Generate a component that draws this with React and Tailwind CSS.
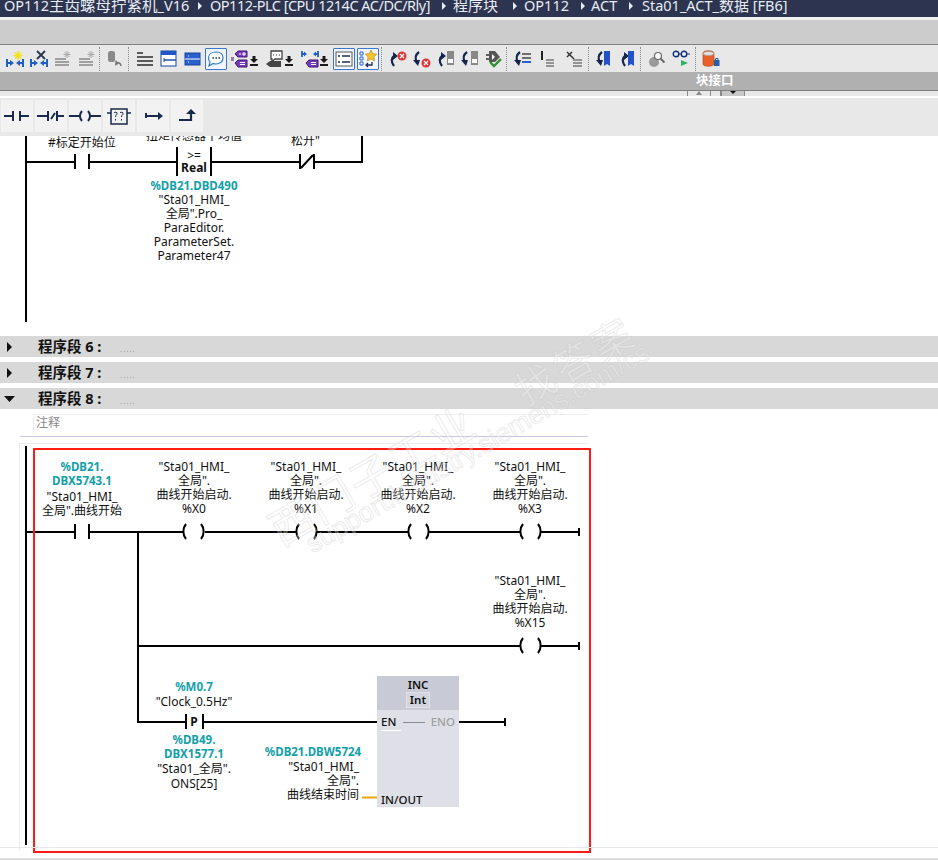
import React from 'react';

const FONT = "font-['Noto_Sans','Noto_Sans_CJK_SC',sans-serif]";

const Chevron = () => (
  <svg width="6" height="10" viewBox="0 0 6 10" className="shrink-0">
    <path d="M1 1l4 4-4 4z" fill="#e8ecf4" />
  </svg>
);

/* ---- toolbar icons, 18x18 ---- */
const Icon = ({ children, w = 18 }) => (
  <svg width={w} height="18" viewBox={`0 0 ${w} 18`} className="shrink-0" fill="none">
    {children}
  </svg>
);

const NetGlyph = ({ color = '#1f5fc4' }) => (
  <g>
    <path d="M1 9v8M17 9v8M1 13h3M14 13h3" stroke={color} strokeWidth="2" />
    <path d="M4 10l4 3-4 3zM14 10l-4 3 4 3z" fill={color} />
  </g>
);

const Lines = ({ color = '#6f6f6f' }) => (
  <path d="M1 9h11M1 12h14M1 15h14" stroke={color} strokeWidth="2" />
);

const Spark = () => (
  <path d="M13 1v7M9.500 4.500h7M10.500 2l5 5M15.500 2l-5 5" stroke="#a8a8a8" strokeWidth="1" />
);

const Cross = ({ x = 13, y = 5 }) => (
  <g>
    <circle cx={x} cy={y} r="4.500" fill="#e0363a" />
    <path d={`M${x - 2} ${y - 2}l4 4m0-4l-4 4`} stroke="#fff" strokeWidth="1.200" />
  </g>
);

const CurveUp = () => (
  <g>
    <path d="M5 16C2 12 2 8 5 6" stroke="#14254f" strokeWidth="2.200" />
    <path d="M4 2l5 4-5 4z" fill="#14254f" />
  </g>
);

const CurveDown = () => (
  <g>
    <path d="M6 2C2 5 2 9 4 12" stroke="#14254f" strokeWidth="2.200" />
    <path d="M0 10l7 0-2 6z" fill="#14254f" />
  </g>
);

const Tag = () => (
  <g>
    <path d="M5 4l3-3h9v6H8z" fill="#7b3bb8" stroke="#3c1570" />
    <path d="M5 13l3-3h9v7H8z" fill="#7b3bb8" stroke="#3c1570" />
    <path d="M10 12.500h5M10 14.500h5" stroke="#fff" />
    <path d="M10 3v2M13 3v2h2V3z" stroke="#fff" />
    <path d="M1 8h3M1 10h3" stroke="#3c1570" />
  </g>
);

const DownBar = () => (
  <svg width="8" height="18" viewBox="0 0 8 18" className="shrink-0">
    <path d="M2.500 6h3v3H8L4 13 0 9h2.500zM0 14h8v2H0z" fill="#1a1a1a" />
  </svg>
);

const Sep = ({ className }) => (
  <div className={`h-[24px] shrink-0 border-l border-dotted border-[#8a8a8a] ${className}`} />
);

const Selected = ({ className, children }) => (
  <div className={`flex h-[22px] w-[22px] shrink-0 items-center justify-center rounded-[1px] border border-[#3a78d0] bg-[#f2f6fc] ${className}`}>
    {children}
  </div>
);

const Toolbar = () => (
  <div className="flex h-[27px] items-center bg-[#e8e8e8] pl-[6px]">
    <Icon>
      <NetGlyph />
      <path d="M12 1v9M7.500 5.500h9M9 2.500l6 6M15 2.500l-6 6" stroke="#f2e21a" strokeWidth="1.400" />
    </Icon>
    <div className="ml-[6px]">
      <Icon>
        <NetGlyph />
        <path d="M7 1l8 8M15 1l-8 8" stroke="#2a3550" strokeWidth="1.800" />
      </Icon>
    </div>
    <div className="ml-[6px]">
      <Icon><Lines color="#a0a0a0" /><Spark /></Icon>
    </div>
    <div className="ml-[6px]">
      <Icon><Lines color="#a0a0a0" /><Spark /></Icon>
    </div>
    <Sep className="ml-[3px]" />
    <div className="ml-[6px]">
      <Icon>
        <rect x="2" y="1" width="7" height="11" rx="2.500" fill="#8a8a8a" />
        <path d="M15 16c0-3-3-4-5-3M10 10.500v4l3-2" stroke="#777" strokeWidth="1.500" />
      </Icon>
    </div>
    <Sep className="ml-[4px]" />
    <div className="ml-[7px]">
      <Icon>
        <path d="M1 3h6M1 7h16M1 11h16M1 15h16" stroke="#5a5a5a" strokeWidth="2" />
      </Icon>
    </div>
    <div className="ml-[6px]">
      <Icon>
        <rect x="1" y="1" width="15" height="15" fill="#fff" stroke="#16459e" />
        <rect x="1" y="1" width="15" height="4" fill="#1f57c8" />
        <path d="M4 10h12" stroke="#16459e" strokeWidth="1.400" />
        <path d="M4 8v4" stroke="#16459e" />
      </Icon>
    </div>
    <div className="ml-[6px]">
      <Icon>
        <rect x="1" y="3" width="15" height="12" fill="#2a5fd0" stroke="#16459e" />
        <path d="M1 9h15" stroke="#fff" />
        <path d="M4 6h1M4 12h1" stroke="#fff" />
      </Icon>
    </div>
    <Selected className="ml-[3px]">
      <Icon>
        <path d="M9 2c4.500 0 7 2.500 7 6s-3 6-7 6c-1 0-2 0-3-.5L2 16l1-4c-1-1-1.500-2.500-1.500-4 0-3.500 3-6 7.500-6z" fill="#fff" stroke="#2f7cc8" strokeWidth="1.200" />
        <path d="M5.500 8h1.500M8.500 8H10M11.500 8H13" stroke="#333" strokeWidth="1.400" />
      </Icon>
    </Selected>
    <div className="ml-[3px] flex items-center gap-[2px]">
      <Icon><Tag /></Icon>
      <DownBar />
    </div>
    <div className="ml-[8px] flex items-center gap-[1px]">
      <Icon>
        <path d="M5 1h11v8H9l-3 2.500V9H5z" fill="#fff" stroke="#444" strokeWidth="1.300" />
        <path d="M7 5h1M10 5h1M13 5h1" stroke="#333" />
        <path d="M0 14l4-3h11v6H4z" fill="#444" />
      </Icon>
      <DownBar />
    </div>
    <div className="ml-[8px] flex items-center gap-[1px]">
      <Icon>
        <path d="M1 1v6M17 1v6M1 4h2M15 4h2" stroke="#1f5fc4" strokeWidth="1.800" />
        <path d="M3 1.500l3 2.500-3 2.500zM15 1.500L12 4l3 2.500z" fill="#1f5fc4" />
        <path d="M5 13l3-3h9v7H8z" fill="#7b3bb8" stroke="#3c1570" />
        <path d="M10 12.500h5M10 14.500h5" stroke="#fff" />
      </Icon>
      <DownBar />
    </div>
    <Selected className="ml-[5px]">
      <Icon>
        <rect x="1" y="2" width="16" height="14" fill="#fff" stroke="#555" />
        <path d="M3 6h2M3 12h2M7 6h8M7 12h8" stroke="#1f2f55" strokeWidth="1.600" />
      </Icon>
    </Selected>
    <Selected className="ml-[2px]">
      <Icon>
        <path d="M1 2h3v3H1zM1 7h3v3H1zM1 12h3v3H1z" stroke="#2a5fd0" />
        <path d="M12 0l1.800 3.600 4 .6-2.900 2.800.7 4-3.600-1.900-3.600 1.900.7-4L6.200 4.200l4-.6z" fill="#f4c430" stroke="#b08a10" strokeWidth=".6" />
        <path d="M13 12v3H7M9 13l-2 2 2 2" stroke="#1f2f55" strokeWidth="1.300" />
      </Icon>
    </Selected>
    <Sep className="ml-[2px]" />
    <div className="ml-[7px]">
      <Icon><CurveUp /><Cross y={6} /></Icon>
    </div>
    <div className="ml-[6px]">
      <Icon><CurveDown /><Cross y={13} /></Icon>
    </div>
    <div className="ml-[6px]">
      <Icon>
        <CurveUp />
        <rect x="10" y="1" width="7" height="14" fill="#888" />
        <rect x="11" y="9" width="5" height="4" fill="#fff" />
      </Icon>
    </div>
    <div className="ml-[6px]">
      <Icon>
        <CurveDown />
        <rect x="10" y="1" width="7" height="14" fill="#888" />
        <rect x="11" y="9" width="5" height="4" fill="#fff" />
      </Icon>
    </div>
    <div className="ml-[6px]">
      <Icon>
        <path d="M1 5h3M1 9h3" stroke="#333" strokeWidth="1.500" />
        <path d="M4 1h6l5 6-5 5H4z" fill="#555" />
        <path d="M7 4l3 3-3 3z" fill="#fff" />
        <path d="M5 12l4 4 7-7" stroke="#2f8f2f" strokeWidth="2.400" />
      </Icon>
    </div>
    <Sep className="ml-[3px]" />
    <div className="ml-[7px]">
      <Icon>
        <CurveDown />
        <path d="M8 4h9M8 8h9" stroke="#6f6f6f" strokeWidth="1.800" />
        <path d="M8 12h9" stroke="#2a5fd0" strokeWidth="2" />
      </Icon>
    </div>
    <div className="ml-[7px]">
      <Icon>
        <path d="M3 1v9" stroke="#222" strokeWidth="2" />
        <path d="M7 10h8M7 13h8M7 16h8" stroke="#777" strokeWidth="1.500" />
      </Icon>
    </div>
    <div className="ml-[8px]">
      <Icon>
        <path d="M2 2l7 7M7 2L2 7" stroke="#333" strokeWidth="1.500" />
        <path d="M8 10h9M8 13h9M8 16h9" stroke="#777" strokeWidth="1.500" />
      </Icon>
    </div>
    <Sep className="ml-[5px]" />
    <div className="ml-[7px]">
      <Icon w={15}>
        <CurveDown />
        <path d="M8 1h6v15l-3-2-3 2z" fill="#2350c8" />
      </Icon>
    </div>
    <div className="ml-[9px]">
      <Icon w={15}>
        <CurveUp />
        <path d="M8 1h6v15l-3-2-3 2z" fill="#2350c8" />
      </Icon>
    </div>
    <Sep className="ml-[5px]" />
    <div className="ml-[7px]">
      <Icon>
        <circle cx="6" cy="12" r="5" fill="#9a9a9a" />
        <circle cx="10" cy="6" r="3.500" fill="#fff" stroke="#666" strokeWidth="1.200" />
        <path d="M12.500 8.500l4 4" stroke="#666" strokeWidth="1.800" />
      </Icon>
    </div>
    <div className="ml-[6px]">
      <Icon>
        <circle cx="4" cy="4" r="2.800" stroke="#14307a" strokeWidth="1.400" />
        <circle cx="12" cy="4" r="2.800" stroke="#14307a" strokeWidth="1.400" />
        <path d="M7 4h2M15 4h3" stroke="#14307a" strokeWidth="1.200" />
        <path d="M9 10l7 3-7 3z" fill="#2fb060" />
      </Icon>
    </div>
    <Sep className="ml-[5px]" />
    <div className="ml-[6px]">
      <Icon>
        <path d="M1 3c0-3 11-3 11 0v11c0 3-11 3-11 0z" fill="#e8602a" stroke="#b04010" strokeWidth=".6" />
        <ellipse cx="6.500" cy="3.500" rx="5.200" ry="2" fill="#e4e4e4" stroke="#999" strokeWidth=".6" />
        <rect x="12" y="10" width="5.500" height="6" fill="#2a5fa8" />
        <path d="M13.500 10V8.500h2.500V10" stroke="#2a5fa8" />
      </Icon>
    </div>
  </div>
);

/* ---- top chrome ---- */
const Header = () => (
  <div className={FONT}>
    <div className="flex h-[17px] items-start overflow-hidden bg-[#2c3450] pl-[4px] text-[14.500px] leading-[11px] text-[#e8ecf4]">
      <span className="w-[183px] whitespace-nowrap">OP112<span className="text-[15.500px]">主齿螺母拧紧机</span>_V16</span>
      <span className="ml-[10px] mt-[1px]"><Chevron /></span>
      <span className="ml-[7px] w-[220px] whitespace-nowrap tracking-[-0.5px]">OP112-PLC [CPU 1214C AC/DC/Rly]</span>
      <span className="ml-[11px] mt-[1px]"><Chevron /></span>
      <span className="ml-[6px] w-[50px] whitespace-nowrap text-[15px]">程序块</span>
      <span className="ml-[9px] mt-[1px]"><Chevron /></span>
      <span className="ml-[6px] w-[47px] whitespace-nowrap">OP112</span>
      <span className="ml-[9px] mt-[1px]"><Chevron /></span>
      <span className="ml-[5px] w-[28px] whitespace-nowrap">ACT</span>
      <span className="ml-[9px] mt-[1px]"><Chevron /></span>
      <span className="ml-[8px] whitespace-nowrap">Sta01_ACT_<span className="text-[15px]">数据</span> [FB6]</span>
    </div>
    <div className="h-[3px] bg-[#f0f0f0]" />
    <div className="h-[24px] bg-[#cccccc]" />
    <div className="h-px bg-[#7f7f7f]" />
    <Toolbar />
    <div className="relative h-[18px] bg-[#b0b0b0]">
      <span className="absolute left-[696px] top-0 text-[12.500px] font-bold leading-[18px] text-white">块接口</span>
    </div>
    <div className="h-px bg-[#7f7f7f]" />
    <div className="flex h-[5px] bg-[#e8e8e8] pl-[687px]">
      <div className="flex w-[24px] justify-center border-x border-[#8a8a8a]">
        <svg width="6" height="4" viewBox="0 0 6 4"><path d="M3 0l3 4H0z" fill="#8a8a8a" /></svg>
      </div>
      <div className="w-[10px] border-r border-[#8a8a8a]" />
      <div className="flex w-[24px] justify-center border-x border-[#8a8a8a] bg-[#c8c8c8]">
        <svg width="6" height="3" viewBox="0 0 6 3"><path d="M0 0h6L3 3z" fill="#111" /></svg>
      </div>
    </div>
    <div className="h-[2px] bg-white" />
    <div className="flex h-[38px] items-start gap-[2px] bg-[#e8e8e8] pl-px pt-[2px]">
      {[
        <path key="a" d="M1 8h9M10 3v10M17 3v10M17 8h9" stroke="#1a2a4a" strokeWidth="2" />,
        <path key="b" d="M0 8h11M11 3v10M14 11l4-6M20 3v10M20 8h7" stroke="#1a2a4a" strokeWidth="2" />,
        <g key="c" stroke="#1a2a4a" strokeWidth="2" fill="none">
          <path d="M-2 8h11M19 8h11" />
          <path d="M11 3c-2.500 3-2.500 7 0 10M17 3c2.500 3 2.500 7 0 10" />
        </g>,
        <g key="d" stroke="#1a2a4a" fill="none">
          <rect x="6" y="1" width="16" height="15" strokeWidth="1.500" />
          <path d="M2 5h4M22 5h4" strokeWidth="1.500" />
          <path d="M9 5c1-1.500 3.500-1 3 1-.2 1-1.500 1-1.500 3M10.500 11v1.500M15 5c1-1.500 3.500-1 3 1-.2 1-1.500 1-1.500 3M16.500 11v1.500" strokeWidth="1" />
        </g>,
        <g key="e">
          <path d="M7 5v5M7 8h13" stroke="#1a2a4a" strokeWidth="2" />
          <path d="M19 4l5 4-5 4z" fill="#1a2a4a" />
        </g>,
        <g key="f">
          <path d="M6 12h12V6" stroke="#1a2a4a" strokeWidth="2.200" fill="none" />
          <path d="M13 6l5-5 5 5z" fill="#1a2a4a" />
        </g>,
      ].map((glyph, i) => (
        <div key={i} className="flex h-[32px] w-[32px] items-center justify-center bg-[#f2f2f2]">
          <svg width="28" height="16" viewBox="0 0 28 16" className="overflow-visible">{glyph}</svg>
        </div>
      ))}
    </div>
  </div>
);

/* ---- ladder helpers ---- */
const Contact = ({ x, y }) => (
  <path d={`M${x} ${y - 8}v15M${x + 14} ${y - 8}v15`} stroke="#000" strokeWidth="2" />
);

const Coil = ({ x, y }) => (
  <path d={`M${x + 3} ${y - 8}c-3.500 4-3.500 11 0 15M${x + 18} ${y - 8}c3.500 4 3.500 11 0 15`} stroke="#000" strokeWidth="2" fill="none" />
);

const Text = ({ className, children }) => (
  <div className={`absolute whitespace-nowrap text-[12px] leading-[14px] text-[#111] ${className}`}>
    {children}
  </div>
);

const Operand = ({ className, children }) => (
  <Text className={`-translate-x-1/2 text-center ${className}`}>{children}</Text>
);

const Address = ({ className, children }) => (
  <Text className={`-translate-x-1/2 text-center !text-[11.500px] font-bold !text-[#12a0a8] ${className}`}>{children}</Text>
);

const UpperNetwork = () => (
  <div className={`relative h-[200px] overflow-hidden bg-white ${FONT}`}>
    <svg width="938" height="200" viewBox="0 136 938 200" className="absolute inset-0">
      <path d="M26 136v186" stroke="#000" strokeWidth="2" />
      <path d="M26 162h49M90 162h87M212 162h87M314 162h48v-26" stroke="#000" strokeWidth="2" fill="none" />
      <Contact x={75} y={162} />
      <path d="M177 147v29M211 147v29" stroke="#000" strokeWidth="2" />
      <path d="M300 154v15M314 154v15M301 168l12-13" stroke="#000" strokeWidth="2" />
    </svg>
    <Text className="left-[48px] top-0">#标定开始位</Text>
    <Operand className="left-[194px] top-[-7px]">扭矩传感器平均值</Operand>
    <Text className="left-[291px] top-[-2px]">松开"</Text>
    <Operand className="left-[194px] top-[13px] text-[11px]">&gt;=</Operand>
    <Operand className="left-[194px] top-[25px] font-bold">Real</Operand>
    <Address className="left-[194px] top-[43px]">%DB21.DBD490</Address>
    <Operand className="left-[194px] top-[57px]">
      "Sta01_HMI_
      <br />
      全局".Pro_
      <br />
      ParaEditor.
      <br />
      ParameterSet.
      <br />
      Parameter47
    </Operand>
  </div>
);

const NetworkBar = ({ label, open }) => (
  <div className={`flex h-[21px] items-center bg-[#d8d8d8] ${FONT}`}>
    <div className="flex w-[38px] justify-start pl-[4px]">
      {open ? (
        <svg width="12" height="8" viewBox="0 0 12 8"><path d="M0 1h11L5.500 7z" fill="#111" /></svg>
      ) : (
        <svg width="12" height="10" viewBox="0 0 12 10" className="ml-[2px]"><path d="M1 0l5 5-5 5z" fill="#111" /></svg>
      )}
    </div>
    <span className="w-[82px] whitespace-pre text-[14.500px] font-bold text-[#111]">{label}</span>
    <span className="mt-[5px] text-[8px] tracking-[1px] text-[#999]">.....</span>
  </div>
);

const Coils = ({ y, xs }) => xs.map((x) => <Coil key={x} x={x} y={y} />);

const LowerNetwork = () => (
  <div className={`relative h-[423px] overflow-hidden bg-white ${FONT}`}>
    <div className="absolute left-[19px] top-[6px] h-[408px] w-[569px] border-l border-t border-[#eeeeee]" />
    <svg width="938" height="423" viewBox="0 437 938 423" className="absolute inset-0">
      <path d="M26 446v399" stroke="#000" strokeWidth="2" />
      <path d="M26 532h49M90 532h93M205 532h91M317 532h91M429 532h91M541 532h38M579 528v8" stroke="#000" strokeWidth="2" fill="none" />
      <path d="M138 532v190h47M204 722h173M138 646h382M541 646h38M579 642v8" stroke="#000" strokeWidth="2" fill="none" />
      <Contact x={75} y={532} />
      <Coils y={532} xs={[183, 296, 408, 520]} />
      <Coil x={520} y={646} />
      <path d="M186 714v15M203 714v15" stroke="#000" strokeWidth="2" />
      <path d="M459 722h46M505 718v8" stroke="#000" strokeWidth="2" fill="none" />
      <path d="M362 797.500h15" stroke="#f5a300" strokeWidth="2" />
    </svg>

    <div className="absolute left-[33px] top-[11px] h-[405px] w-[558px] border-2 border-[#ff1a14]" />

    <Address className="left-[82px] top-[23px]">
      %DB21.
      <br />
      DBX5743.1
    </Address>
    <Operand className="left-[82px] top-[53px]">
      "Sta01_HMI_
      <br />
      全局".曲线开始
    </Operand>

    <Operand className="left-[194px] top-[23px]">
      "Sta01_HMI_
      <br />
      全局".
      <br />
      曲线开始启动.
      <br />
      %X0
    </Operand>
    <Operand className="left-[306px] top-[23px]">
      "Sta01_HMI_
      <br />
      全局".
      <br />
      曲线开始启动.
      <br />
      %X1
    </Operand>
    <Operand className="left-[418px] top-[23px]">
      "Sta01_HMI_
      <br />
      全局".
      <br />
      曲线开始启动.
      <br />
      %X2
    </Operand>
    <Operand className="left-[530px] top-[23px]">
      "Sta01_HMI_
      <br />
      全局".
      <br />
      曲线开始启动.
      <br />
      %X3
    </Operand>
    <Operand className="left-[530px] top-[137px]">
      "Sta01_HMI_
      <br />
      全局".
      <br />
      曲线开始启动.
      <br />
      %X15
    </Operand>

    <Address className="left-[194px] top-[243px]">%M0.7</Address>
    <Operand className="left-[194px] top-[258px]">"Clock_0.5Hz"</Operand>
    <Operand className="left-[194px] top-[278px] font-bold">P</Operand>
    <Address className="left-[194px] top-[296px]">
      %DB49.
      <br />
      DBX1577.1
    </Address>
    <Operand className="left-[194px] top-[325px]">"Sta01_全局".</Operand>
    <Operand className="left-[194px] top-[340px]">ONS[25]</Operand>

    <Address className="left-[313px] top-[308px]">%DB21.DBW5724</Address>
    <Text className="right-[579px] top-[323px] text-right">
      "Sta01_HMI_
      <br />
      全局".
      <br />
      曲线结束时间
    </Text>

    <div className="absolute left-[377px] top-[239px] w-[82px]">
      <div className="flex h-[34px] flex-col items-center bg-[#c8cad6] text-[11.500px] font-semibold leading-[14px] text-[#111]">
        <span className="mt-[2px]">INC</span>
        <span className="border border-[#dfe0e8] bg-[#d2d4de] px-[3px]">Int</span>
      </div>
      <div className="relative h-[97px] bg-[#dfdfe7] text-[11.500px] font-medium leading-[14px] text-[#111]">
        <span className="absolute left-[4px] top-[5px]">EN</span>
        <div className="absolute left-[4px] top-[20px] h-px w-[20px] bg-white" />
        <div className="absolute left-[26px] top-[12px] h-px w-[22px] bg-[#8a8a8a]" />
        <span className="absolute right-[4px] top-[5px] text-[#a0a0a0]">ENO</span>
        <span className="absolute left-[4px] top-[83px]">IN/OUT</span>
      </div>
    </div>

    <div className="absolute left-0 top-[410px] h-px w-full bg-[#e8e8e8]" />
    <div className="absolute bottom-0 left-0 h-[2px] w-full bg-[#dddddd]" />
  </div>
);

const Watermark = () => (
  <div className="pointer-events-none absolute inset-0 overflow-hidden font-['Liberation_Sans','Noto_Sans_CJK_SC',sans-serif] text-white/30 [-webkit-text-stroke:1px_rgba(190,190,190,0.3)]">
    <span className="absolute left-[510px] top-[332px] -rotate-[30deg] whitespace-nowrap text-[40px] tracking-[4px]">找答案</span>
    <span className="absolute left-[258px] top-[444px] -rotate-[30deg] whitespace-nowrap text-[44px] tracking-[2px]">西门子工业</span>
    <span className="absolute left-[282px] top-[428px] -rotate-[30deg] whitespace-nowrap text-[27px]">support.industry.siemens.com/cs</span>
  </div>
);

export default function App() {
  return (
    <div className="relative h-[860px] w-[938px] overflow-hidden bg-white">
      <Header />
      <UpperNetwork />
      <NetworkBar label="程序段 6 :" />
      <div className="h-[5px]" />
      <NetworkBar label="程序段 7 :" />
      <div className="h-[5px]" />
      <NetworkBar label="程序段 8 :" open />
      <div className={`h-[28px] bg-white pl-[33px] pt-[5px] ${FONT}`}>
        <div className="relative h-[21px] w-[555px] border-l border-t border-[#eeeeee] pl-[2px] text-[12px] leading-[16px] text-[#8a8a8a]">
          注释
          <div className="absolute -left-[14px] top-[21px] h-px w-[568px] bg-[#c8c8e4]" />
        </div>
      </div>
      <LowerNetwork />
      <Watermark />
    </div>
  );
}
